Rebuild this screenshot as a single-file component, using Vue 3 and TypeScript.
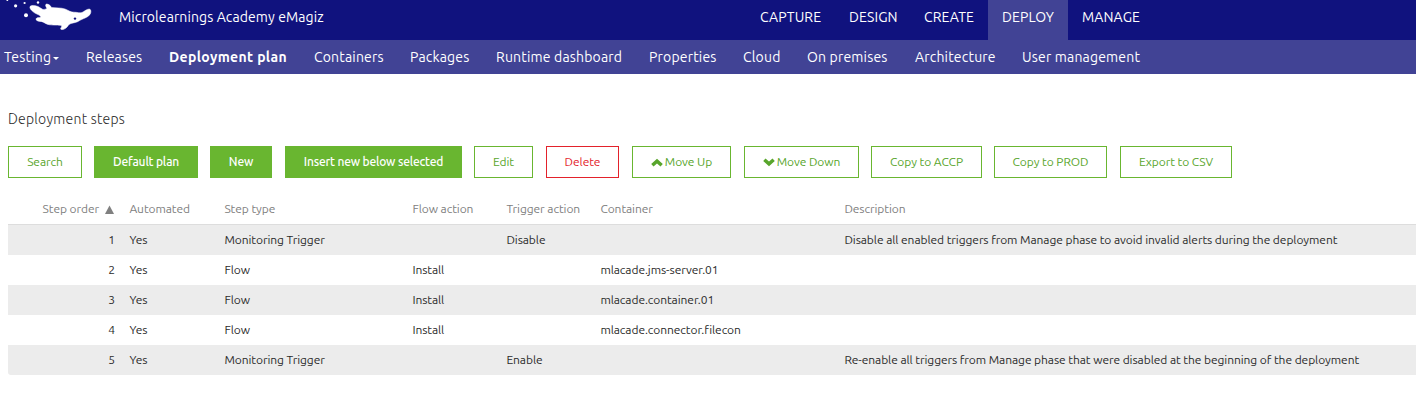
<script setup lang="ts">
interface Button {
  label: string
  kind: 'outline' | 'solid' | 'danger'
  width: number
  gap: number
  icon?: 'up' | 'down'
}
interface Step {
  order: number
  automated: string
  type: string
  flow: string
  trigger: string
  container: string
  description: string
}

const phases = ['CAPTURE', 'DESIGN', 'CREATE', 'DEPLOY', 'MANAGE']
const pages = [
  'Testing', 'Releases', 'Deployment plan', 'Containers', 'Packages', 'Runtime dashboard',
  'Properties', 'Cloud', 'On premises', 'Architecture', 'User management',
]
const buttons: Button[] = [
  { label: 'Search', kind: 'outline', width: 74, gap: 12 },
  { label: 'Default plan', kind: 'solid', width: 104, gap: 12 },
  { label: 'New', kind: 'solid', width: 62, gap: 13 },
  { label: 'Insert new below selected', kind: 'solid', width: 177, gap: 12 },
  { label: 'Edit', kind: 'outline', width: 59, gap: 13 },
  { label: 'Delete', kind: 'danger', width: 73, gap: 13 },
  { label: 'Move Up', kind: 'outline', width: 99, gap: 13, icon: 'up' },
  { label: 'Move Down', kind: 'outline', width: 115, gap: 12, icon: 'down' },
  { label: 'Copy to ACCP', kind: 'outline', width: 111, gap: 12 },
  { label: 'Copy to PROD', kind: 'outline', width: 113, gap: 13 },
  { label: 'Export to CSV', kind: 'outline', width: 112, gap: 0 },
]
const steps: Step[] = [
  { order: 1, automated: 'Yes', type: 'Monitoring Trigger', flow: '', trigger: 'Disable', container: '', description: 'Disable all enabled triggers from Manage phase to avoid invalid alerts during the deployment' },
  { order: 2, automated: 'Yes', type: 'Flow', flow: 'Install', trigger: '', container: 'mlacade.jms-server.01', description: '' },
  { order: 3, automated: 'Yes', type: 'Flow', flow: 'Install', trigger: '', container: 'mlacade.container.01', description: '' },
  { order: 4, automated: 'Yes', type: 'Flow', flow: 'Install', trigger: '', container: 'mlacade.connector.filecon', description: '' },
  { order: 5, automated: 'Yes', type: 'Monitoring Trigger', flow: '', trigger: 'Enable', container: '', description: 'Re-enable all triggers from Manage phase that were disabled at the beginning of the deployment' },
]
</script>

<template>
  <div class="page">
    <header class="topbar">
      <svg class="logo" viewBox="0 0 110 40" width="110" height="40" aria-hidden="true">
        <g fill="#fff">
          <path d="M30 6.5C31 5 35 5.2 38 6.5L43 9.5C45 9.4 46 8.8 47 8.4C45.6 6.5 45 4.6 46.4 4.1C48.2 3.8 50.8 5.6 51.5 7.5C56 8 61 7.6 65 9C68 10 70.5 12.3 74 12.2C77 12.1 79.5 13.4 82 12.5C84.5 11.3 86.5 9.2 89.2 9C91.3 9.2 91.3 12.4 90 14.5C87.7 17.6 83 18.5 79.7 20.5C77 22.4 74 22.7 71 23.5C68.5 24.1 68.2 26.3 66 28C64.5 29.2 62 30.2 60.8 29.2C60 28.2 62.2 27 61.5 25.4C56 24.7 50.5 25.8 46 23.7C44 22.5 42.5 21.4 40 21.4C38 21.3 35.7 20.3 36 18.9C36.5 17.2 39.5 18 41 16.7C39.5 14.7 36.8 14.4 34.5 12.8C32 11 29.3 8.5 30 6.5Z" stroke="#fff" stroke-width=".5" />
          <circle cx="15.6" cy="5.8" r="1.6" />
          <circle cx="24.6" cy="3" r="1.1" />
          <circle cx="38" cy="2.5" r="1.2" />
          <circle cx="26" cy="15.2" r="2" />
          <circle cx="7.3" cy="0" r="1" />
        </g>
        <circle cx="75" cy="18.6" r="1.2" fill="#10127e" />
      </svg>
      <div class="product">Microlearnings Academy eMagiz</div>
      <nav class="phases">
        <a v-for="p in phases" :key="p" :class="['phase', { active: p === 'DEPLOY' }]">{{ p }}</a>
      </nav>
    </header>
    <nav class="subnav">
      <a v-for="(p, i) in pages" :key="p" :class="{ current: p === 'Deployment plan' }">{{ p }}<i v-if="i === 0" class="caret"></i></a>
    </nav>
    <main>
      <h1>Deployment steps</h1>
      <div class="toolbar">
        <button v-for="b in buttons" :key="b.label" :class="b.kind" :style="{ width: b.width + 'px', marginRight: b.gap + 'px' }">
          <svg v-if="b.icon" :class="b.icon" width="12" height="9" viewBox="0 0 12 9"><path d="M6 .7L11.8 6.1L9.5 8.5L6 5.4L2.5 8.5L.2 6.1Z" fill="currentColor" /></svg>
          <span>{{ b.label }}</span>
        </button>
      </div>
      <table>
        <colgroup><col class="c1"><col class="c2"><col class="c3"><col class="c4"><col class="c5"><col class="c6"><col></colgroup>
        <thead>
          <tr>
            <th class="num"><span>Step order</span><svg width="9" height="9" viewBox="0 0 9 9"><path d="M4.5 0.5L9 9H0Z" fill="#808080" /></svg></th>
            <th>Automated</th><th>Step type</th><th>Flow action</th><th>Trigger action</th><th>Container</th><th>Description</th>
          </tr>
        </thead>
        <tbody>
          <tr v-for="s in steps" :key="s.order">
            <td class="num">{{ s.order }}</td><td>{{ s.automated }}</td><td>{{ s.type }}</td><td>{{ s.flow }}</td><td>{{ s.trigger }}</td><td>{{ s.container }}</td><td>{{ s.description }}</td>
          </tr>
        </tbody>
      </table>
    </main>
  </div>
</template>

<style>
body { background: #fff; }
</style>

<style scoped>
.page { height: 404px; overflow: hidden; font-family: Ubuntu, "Noto Sans", sans-serif; color: #2b2b2b; background: #fff; }
.topbar { display: flex; height: 40px; background: #10127e; color: #fff; font-size: 14px; line-height: 34px; white-space: nowrap; }
.logo { flex: none; }
.product { width: 627px; padding-left: 9px; letter-spacing: 0.1px; }
.phases { display: grid; grid-template-columns: 89px 75px 78px 80px 86px; letter-spacing: 0.12px; }
.phase { padding-left: 14px; }
.active { background: #414395; }
.subnav { display: grid; grid-template-columns: 82px 83px 145px 96px 86px 153px 94px 64px 108px 107px 140px; height: 34px; padding-left: 4px; background: #414395; color: #fff; font-size: 14px; line-height: 34px; white-space: nowrap; letter-spacing: 0.18px; }
.current { font-weight: 700; letter-spacing: 0.35px; }
.caret { display: inline-block; margin-left: 2px; border: 3.5px solid transparent; border-top-color: #fff; border-bottom: 0; vertical-align: 2px; }
main { padding: 35px 0 0 8px; }
h1 { margin: 0; height: 37px; font-size: 14px; line-height: 20px; font-weight: 300; letter-spacing: 0.25px; }
.toolbar { display: flex; height: 48px; }
button { box-sizing: border-box; flex: none; height: 32px; padding: 0; border: 1px solid #69b630; background: #fff; color: #58a52c; font: 12px/30px Ubuntu, "Noto Sans", sans-serif; letter-spacing: -0.06px; white-space: nowrap; display: flex; justify-content: center; align-items: center; gap: 2px; }
.solid { background: #69b630; color: #fff; font-weight: 500; letter-spacing: -0.17px; }
.danger { border-color: #e3222b; color: #e3222b; }
.down { transform: rotate(180deg); }
table { width: 1408px; table-layout: fixed; border-collapse: separate; border-spacing: 0; font-size: 12px; line-height: 18px; letter-spacing: -0.07px; }
.c1 { width: 113px; } .c2 { width: 95px; } .c3 { width: 188px; } .c4 { width: 94px; } .c5 { width: 94px; } .c6 { width: 244px; }
th { box-sizing: border-box; padding: 0 0 0 8.4px; border-bottom: 1px solid #ddd; font-weight: 400; text-align: left; color: #808080; white-space: nowrap; height: 31px; }
td { height: 30px; padding: 0 0 0 8.4px; white-space: nowrap; }
.num { text-align: right; padding-right: 6px; }
th.num { padding-right: 7px; }
.num svg { margin-left: 6px; vertical-align: -1px; }
tbody tr:nth-child(odd) td { background: #ececec; }
tbody tr:last-child td:first-child { border-bottom-left-radius: 3px; }
</style>
